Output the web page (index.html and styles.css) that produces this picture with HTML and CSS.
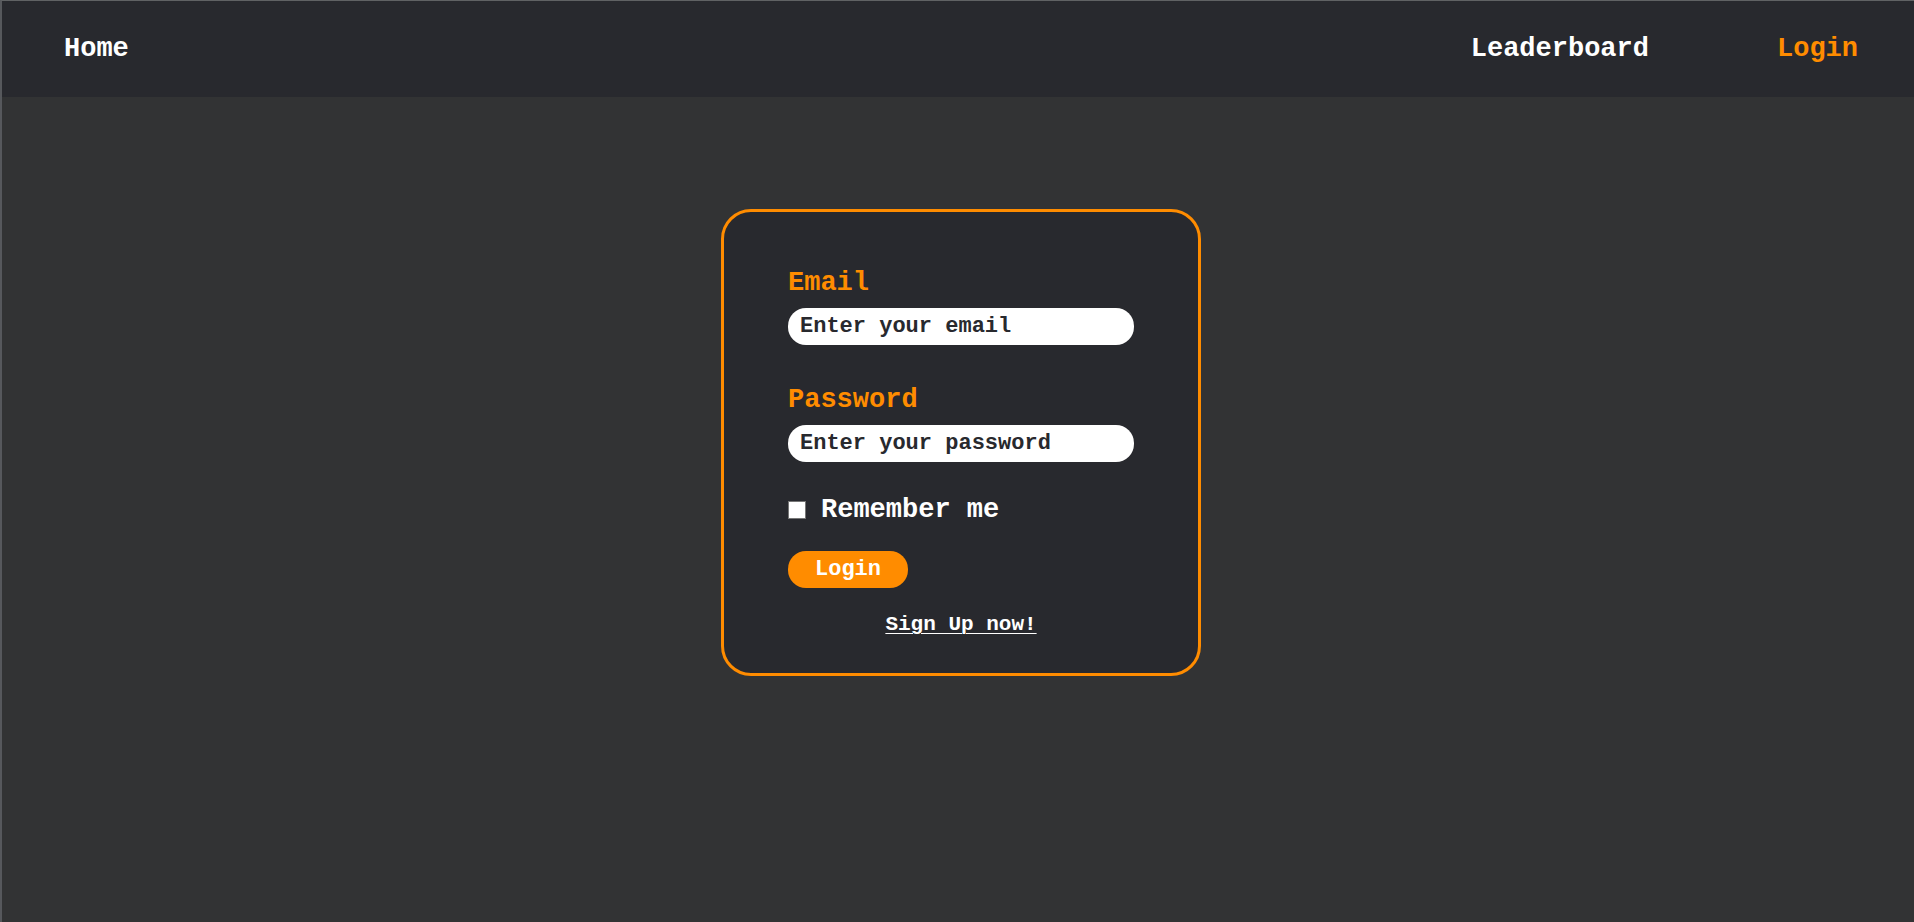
FILE: index.html
```html
<!DOCTYPE html>
<html lang="en">
<head>
<meta charset="utf-8">
<title>Login</title>
<link rel="stylesheet" href="styles.css">
</head>
<body>
<header class="navbar">
  <nav class="nav">
    <a class="nav-link" href="#home">Home</a>
    <div class="nav-group">
      <a class="nav-link" href="#leaderboard">Leaderboard</a>
      <a class="nav-link active" href="#login">Login</a>
    </div>
  </nav>
</header>
<main class="page">
  <form class="card">
    <div class="field">
      <label class="field-label" for="email">Email</label>
      <input class="field-input" id="email" type="email" placeholder="Enter your email">
    </div>
    <div class="field">
      <label class="field-label" for="password">Password</label>
      <input class="field-input" id="password" type="password" placeholder="Enter your password">
    </div>
    <div class="remember">
      <input class="checkbox" id="remember" type="checkbox">
      <label for="remember">Remember me</label>
    </div>
    <button class="submit" type="submit">Login</button>
    <a class="signup" href="#signup">Sign Up now!</a>
  </form>
</main>
</body>
</html>
```
FILE: styles.css
```css
* {
  box-sizing: border-box;
}

html {
  background: #323334;
}

body {
  margin: 0;
  min-height: 100vh;
  border-top: 1px solid #606264;
  border-left: 2px solid #56585c;
  background: #323334;
  color: #fff;
  font: bold 27px/32px "Liberation Mono", monospace;
}

.navbar {
  background: #28292e;
}

.nav {
  display: flex;
  align-items: center;
  justify-content: space-between;
  padding: 32px 56px 32px 62px;
}

.nav-group {
  display: flex;
  gap: 128px;
}

.nav-link {
  color: #fff;
  text-decoration: none;
}

.nav-link.active {
  color: #ff8c00;
}

.page {
  display: flex;
  justify-content: center;
  padding: 112px 0 0 6px;
}

.card {
  display: flex;
  flex-direction: column;
  width: 480px;
  max-width: 100%;
  padding: 55px 64px 36px;
  border: 3px solid #ff8c00;
  border-radius: 30px;
  background: #28292e;
}

.field {
  display: flex;
  flex-direction: column;
  gap: 9px;
  margin-bottom: 39px;
}

.field-label {
  color: #ff8c00;
}

.field-input {
  width: 100%;
  height: 37px;
  padding: 0 12px;
  border: 0;
  border-radius: 18px;
  background: #fff;
  color: #28292e;
  font: bold 22px "Liberation Mono", monospace;
}

.field-input::placeholder {
  color: #28292e;
  opacity: 1;
}

.remember {
  display: flex;
  align-items: center;
  gap: 15px;
  margin: -7px 0 25px;
}

.checkbox {
  appearance: none;
  width: 18px;
  height: 18px;
  margin: 0;
  border: 1px solid #767676;
  background: #fff;
}

.checkbox:checked {
  background: #ff8c00;
}

.submit {
  align-self: flex-start;
  height: 37px;
  margin-bottom: 25px;
  padding: 0 27px;
  border: 0;
  border-radius: 18px;
  background: #ff8c00;
  color: #fff;
  font: bold 22px "Liberation Mono", monospace;
}

.signup {
  align-self: center;
  color: #fff;
  font-size: 21px;
  line-height: 24px;
  text-decoration: underline 1px;
  text-underline-offset: 3px;
}
```
